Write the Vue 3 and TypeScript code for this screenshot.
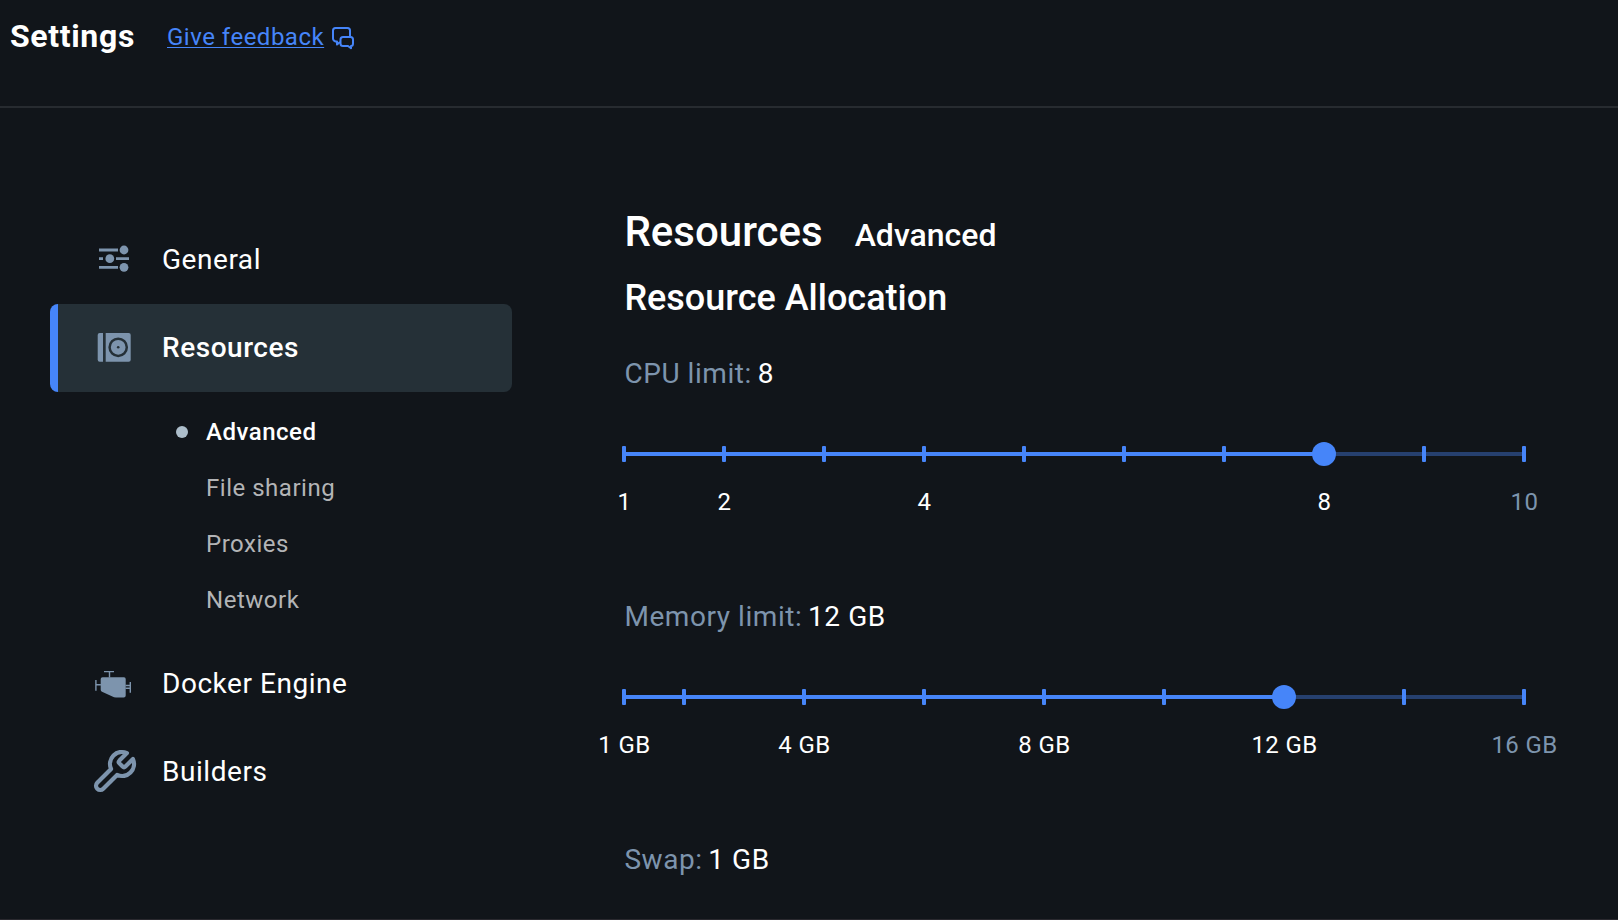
<script setup lang="ts">
interface Mark { value: number; label?: string }
interface Limit { name: string; value: number; unit: string; min: number; max: number; marks: Mark[] }

const subItems: string[] = ['Advanced', 'File sharing', 'Proxies', 'Network']

const limits: Limit[] = [
  {
    name: 'CPU limit', value: 8, unit: '', min: 1, max: 10,
    marks: [
      { value: 1, label: '1' }, { value: 2, label: '2' }, { value: 3 }, { value: 4, label: '4' },
      { value: 5 }, { value: 6 }, { value: 7 }, { value: 8, label: '8' }, { value: 9 },
      { value: 10, label: '10' },
    ],
  },
  {
    name: 'Memory limit', value: 12, unit: ' GB', min: 1, max: 16,
    marks: [
      { value: 1, label: '1 GB' }, { value: 2 }, { value: 4, label: '4 GB' }, { value: 6 },
      { value: 8, label: '8 GB' }, { value: 10 }, { value: 12, label: '12 GB' }, { value: 14 },
      { value: 16, label: '16 GB' },
    ],
  },
]

const percent = (limit: Limit, value: number): string =>
  `${((value - limit.min) / (limit.max - limit.min)) * 100}%`
</script>

<template>
  <div class="window">
    <header class="header">
      <h1 class="title">Settings</h1>
      <a class="feedback">
        <span class="feedback-text">Give feedback</span>
        <svg class="feedback-icon" viewBox="0 0 24 24">
          <path d="M9 16 L6 18.500 V15.500 H4.500 Q2 14.500 2 12.500 V4.500 Q2 2 4.500 2 H16.500 Q19 2 19 4.500 V10" />
          <path d="M12 11 H19.500 Q22 11 22 13.500 V17.500 Q22 20 20 20 V22.300 L17 20 H12 Q9.500 20 9.500 17.500 V13.500 Q9.500 11 12 11 Z" />
        </svg>
      </a>
    </header>

    <div class="body">
      <nav class="sidebar">
        <div class="item">
          <svg class="icon" viewBox="0 0 48 48">
            <path class="line" d="M9 14h19M9 22.700h4M26 22.700h13M9 31.300h19" />
            <circle cx="34" cy="14" r="4.400" />
            <circle cx="19.800" cy="22.700" r="4.400" />
            <circle cx="34" cy="31.300" r="4.400" />
          </svg>
          <span>General</span>
        </div>
        <div class="item selected">
          <svg class="icon" viewBox="0 0 48 48">
            <path d="M13 9v28.700h-3.300a2 2 0 0 1-2-2V11a2 2 0 0 1 2-2z" />
            <path d="M15.700 9h23a2 2 0 0 1 2 2v24.700a2 2 0 0 1-2 2h-23z" />
            <circle class="ring" cx="28.200" cy="23.300" r="8.600" />
            <circle class="hub" cx="28.200" cy="23.300" r="1.300" />
          </svg>
          <span>Resources</span>
        </div>
        <ul class="sub">
          <li v-for="(s, i) in subItems" :key="s" :class="{ active: i === 0 }">
            <span class="bullet"></span>{{ s }}
          </li>
        </ul>
        <div class="item">
          <svg class="icon" viewBox="0 0 48 48">
            <path d="M12.500 17.300H34q1.700 0 1.700 1.700V35.500q0 2-2 2H26q-2 0-3.600-1L12 31.700q-1.300-.6-1.300-2V19q0-1.700 1.800-1.700z" />
            <path class="thin" d="M14 11.600h10M19.500 11.600v6M5.900 20v10.700M5.900 24.700h5M40.300 22v10.700M35.500 25.500h5M35.500 28.300h5" />
          </svg>
          <span>Docker Engine</span>
        </div>
        <div class="item">
          <svg class="icon" viewBox="0 0 24 24">
            <path class="wrench" d="M14.700 6.300a1 1 0 0 0 0 1.400l1.600 1.600a1 1 0 0 0 1.400 0l3.770-3.770a6 6 0 0 1-7.940 7.940l-6.910 6.910a2.120 2.120 0 0 1-3-3l6.910-6.910a6 6 0 0 1 7.940-7.940l-3.760 3.760z" />
          </svg>
          <span>Builders</span>
        </div>
      </nav>

      <main class="content">
        <div class="headline">
          <h2>Resources</h2>
          <span class="crumb">Advanced</span>
        </div>
        <h3>Resource Allocation</h3>
        <section v-for="l in limits" :key="l.name" class="limit">
          <p class="caption">{{ l.name }}: <b>{{ l.value }}{{ l.unit }}</b></p>
          <div class="slider">
            <div class="filled" :style="{ width: percent(l, l.value) }"></div>
            <template v-for="m in l.marks" :key="m.value">
              <i class="tick" :style="{ left: percent(l, m.value) }"></i>
              <span
                v-if="m.label"
                class="label"
                :class="{ beyond: m.value > l.value }"
                :style="{ left: percent(l, m.value) }"
              >{{ m.label }}</span>
            </template>
            <i class="thumb" :style="{ left: percent(l, l.value) }"></i>
          </div>
        </section>
        <section class="limit">
          <p class="caption">Swap: <b>1 GB</b></p>
        </section>
      </main>
    </div>
  </div>
</template>

<style>
body { background: #11151a; }
</style>

<style scoped>
.window {
  box-sizing: border-box;
  height: 920px;
  overflow: hidden;
  background: #11151a;
  border-bottom: 1px solid #2a292f;
  color: #fff;
  font-family: Roboto, "Liberation Sans", sans-serif;
}
.header {
  box-sizing: border-box;
  display: flex;
  height: 108px;
  padding: 16px 10px 0;
  border-bottom: 2px solid #272b30;
}
.title { margin: 0; width: 157px; font-size: 32px; line-height: 40px; font-weight: 700; letter-spacing: 0.65px; }
.feedback { display: flex; height: 42px; align-items: center; gap: 7px; color: #4685f9; }
.feedback-text {
  font-size: 24px;
  line-height: 42px;
  letter-spacing: 0.5px;
  text-decoration: underline;
  text-decoration-thickness: 1px;
  text-underline-offset: 2px;
  text-decoration-skip-ink: none;
}
.feedback-icon { width: 24px; height: 24px; margin-top: 2px; fill: none; stroke: currentColor; stroke-width: 2; stroke-linejoin: round; }
.body { display: flex; }
.sidebar { width: 462px; padding: 108px 0 0 50px; }
.item {
  box-sizing: border-box;
  display: flex;
  align-items: center;
  gap: 24px;
  height: 88px;
  padding-left: 32px;
  border-left: 8px solid transparent;
  border-radius: 8px;
  font-size: 28px;
  letter-spacing: 0.54px;
}
.item span { margin-top: -1px; }
.selected { background: #253037; border-left-color: #4685f9; font-weight: 500; }
.icon { width: 48px; height: 48px; fill: #7d94ad; }
.line { fill: none; stroke: #7d94ad; stroke-width: 2.800; }
.ring { fill: none; stroke: #253037; stroke-width: 2.500; }
.hub { fill: #253037; }
.thin { fill: none; stroke: #7d94ad; stroke-width: 1.400; }
.wrench { fill: none; stroke: #7d94ad; stroke-width: 2.100; stroke-linejoin: round; stroke-linecap: round; }
.sub { margin: 0; padding: 12px 0 12px 126px; list-style: none; }
.sub li {
  display: flex;
  align-items: center;
  gap: 18px;
  height: 56px;
  font-size: 24px;
  letter-spacing: 0.52px;
  color: #b3b4b6;
}
.sub .active { color: #fff; font-weight: 500; }
.bullet { width: 12px; height: 12px; border-radius: 50%; }
.active .bullet { background: #adbecb; }
.content { width: 900px; padding: 100px 0 0 112px; }
.headline { display: flex; align-items: baseline; gap: 32px; height: 64px; padding-left: 0.4px; line-height: 48px; }
h2 { margin: 0; font-size: 42px; font-weight: 500; }
.crumb { font-size: 32px; font-weight: 500; }
h3 { margin: 0 0 30px 0.4px; font-size: 36px; line-height: 52px; height: 52px; font-weight: 500; }
.limit { height: 243px; }
.caption { margin: 0 0 0 0.4px; height: 40px; font-size: 28px; line-height: 40px; color: #7d94ad; letter-spacing: 0.56px; }
.caption b { font-weight: 400; color: #fff; margin-left: -1.800px; }
.slider { position: relative; height: 4px; margin-top: 58px; background: #26406f; }
.filled { height: 4px; background: #4685f9; }
.tick { position: absolute; top: -6px; width: 4px; height: 16px; margin-left: -2px; border-radius: 1px; background: #4685f9; }
.thumb { position: absolute; top: -10px; width: 24px; height: 24px; margin-left: -12px; border-radius: 50%; background: #4685f9; }
.label { position: absolute; top: 34px; margin-left: 0.5px; transform: translateX(-50%); font-size: 24px; line-height: 32px; letter-spacing: 0.4px; white-space: nowrap; }
.beyond { color: #7d94ad; }
</style>
